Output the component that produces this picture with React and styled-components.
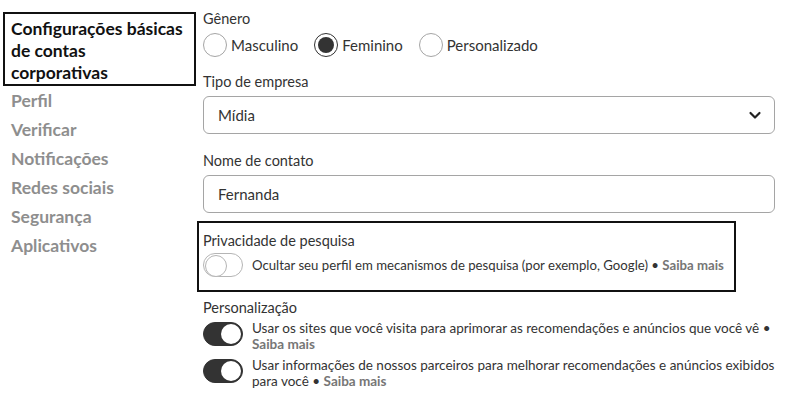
import React from "react";
import styled, { createGlobalStyle } from "styled-components";

const Global = createGlobalStyle`
  html, body { margin: 0; padding: 0; background: #fff; }
  body { font-family: Lato, "Open Sans", Arial, sans-serif; color: #333; }
  * { box-sizing: border-box; }
`;

const Page = styled.div`
  display: flex;
  width: 789px;
  height: 402px;
  overflow: hidden;
`;

const Sidebar = styled.nav`
  width: 197px;
  flex: none;
  padding: 12px 0 0 3px;
`;

const TitleBox = styled.div`
  width: 193px;
  border: 2px solid #111;
  padding: 4px 0 0 6px;
  font-weight: 700;
  font-size: 17.5px;
  line-height: 22px;
  color: #111;
  white-space: nowrap;
`;

const MenuItem = styled.div`
  padding-left: 8px;
  font-weight: 700;
  font-size: 17.5px;
  line-height: 29px;
  color: #8e8e8e;
`;

const Main = styled.main`
  width: 578px;
  flex: none;
  padding-top: 9px;
  display: flex;
  flex-direction: column;
  align-items: flex-start;
`;

const Field = styled.div`
  padding: 0 0 0 6px;
  width: 100%;
  margin-top: ${(p) => p.$mt || 0}px;
`;

const Label = styled.div`
  font-size: 14.5px;
  line-height: 20px;
  color: #333;
`;

const RadioRow = styled.div`
  display: flex;
  align-items: center;
  margin-top: 4px;
  height: 24px;
`;

const RadioOption = styled.label`
  display: flex;
  align-items: center;
  margin-right: ${(p) => p.$mr || 0}px;
  font-size: 15px;
  color: #333;
`;

const RadioCircle = styled.span`
  width: 24px;
  height: 24px;
  border-radius: 50%;
  border: 1px solid ${(p) => (p.$checked ? "#333" : "#a5a5a5")};
  display: flex;
  align-items: center;
  justify-content: center;
  margin-right: 4px;
  &::after {
    content: "";
    display: ${(p) => (p.$checked ? "block" : "none")};
    width: 16px;
    height: 16px;
    border-radius: 50%;
    background: #333;
  }
`;

const Box = styled.div`
  margin-top: 4px;
  width: 572px;
  height: 38px;
  border: 1px solid #a5a5a5;
  border-radius: 6px;
  display: flex;
  align-items: center;
  justify-content: space-between;
  padding: 0 12px 0 14px;
  font-size: 15px;
  color: #333;
`;

const PrivacyBox = styled.section`
  margin-top: 8px;
  border: 2px solid #111;
  padding: 8px 8px 13px 4px;
  width: 539px;
`;

const ToggleRow = styled.div`
  display: flex;
  align-items: ${(p) => (p.$center ? "center" : "flex-start")};
  margin-top: ${(p) => p.$mt || 0}px;
`;

const Toggle = styled.span`
  flex: none;
  position: relative;
  width: 40px;
  height: 24px;
  border-radius: 12px;
  border: 1px solid ${(p) => (p.$on ? "#333" : "#b5b5b5")};
  background: ${(p) => (p.$on ? "#333" : "#fff")};
  margin-right: ${(p) => p.$mr}px;
  margin-top: ${(p) => p.$mt || 0}px;
  &::after {
    content: "";
    position: absolute;
    top: 1px;
    ${(p) => (p.$on ? "right: 1px;" : "left: 1px;")}
    width: 20px;
    height: 20px;
    border-radius: 50%;
    background: #fff;
    border: ${(p) => (p.$on ? "none" : "1px solid #b5b5b5")};
  }
`;

const SmallText = styled.div`
  font-size: ${(p) => p.$size || 13.5}px;
  line-height: 16px;
  color: #333;
  white-space: nowrap;
`;

const More = styled.b`
  color: #767676;
  font-weight: 700;
`;

const Chevron = () => (
  <svg width="14" height="14" viewBox="0 0 14 14">
    <path d="M2.5 5 L7 9.5 L11.5 5" fill="none" stroke="#222" strokeWidth="2.2" strokeLinecap="round" strokeLinejoin="round" />
  </svg>
);

export default function App() {
  return (
    <Page>
      <Global />
      <Sidebar>
        <TitleBox>
          Configurações básicas
          <br />
          de contas
          <br />
          corporativas
        </TitleBox>
        {["Perfil", "Verificar", "Notificações", "Redes sociais", "Segurança", "Aplicativos"].map((t) => (
          <MenuItem key={t}>{t}</MenuItem>
        ))}
      </Sidebar>
      <Main>
        <Field>
          <Label>Gênero</Label>
          <RadioRow>
            <RadioOption $mr={16}>
              <RadioCircle />
              Masculino
            </RadioOption>
            <RadioOption $mr={16}>
              <RadioCircle $checked />
              Feminino
            </RadioOption>
            <RadioOption>
              <RadioCircle />
              Personalizado
            </RadioOption>
          </RadioRow>
        </Field>
        <Field $mt={15}>
          <Label>Tipo de empresa</Label>
          <Box>
            Mídia
            <Chevron />
          </Box>
        </Field>
        <Field $mt={17}>
          <Label>Nome de contato</Label>
          <Box>Fernanda</Box>
        </Field>
        <PrivacyBox>
          <Label>Privacidade de pesquisa</Label>
          <ToggleRow $center $mt={2}>
            <Toggle $mr={9} />
            <SmallText $size={13.2}>
              Ocultar seu perfil em mecanismos de pesquisa (por exemplo, Google) • <More>Saiba mais</More>
            </SmallText>
          </ToggleRow>
        </PrivacyBox>
        <Field $mt={6}>
          <Label>Personalização</Label>
          <ToggleRow $mt={2}>
            <Toggle $on $mr={9} $mt={2} />
            <SmallText>
              Usar os sites que você visita para aprimorar as recomendações e anúncios que você vê •<br />
              <More>Saiba mais</More>
            </SmallText>
          </ToggleRow>
          <ToggleRow $mt={5}>
            <Toggle $on $mr={9} $mt={2} />
            <SmallText>
              Usar informações de nossos parceiros para melhorar recomendações e anúncios exibidos<br />
              para você • <More>Saiba mais</More>
            </SmallText>
          </ToggleRow>
        </Field>
      </Main>
    </Page>
  );
}
